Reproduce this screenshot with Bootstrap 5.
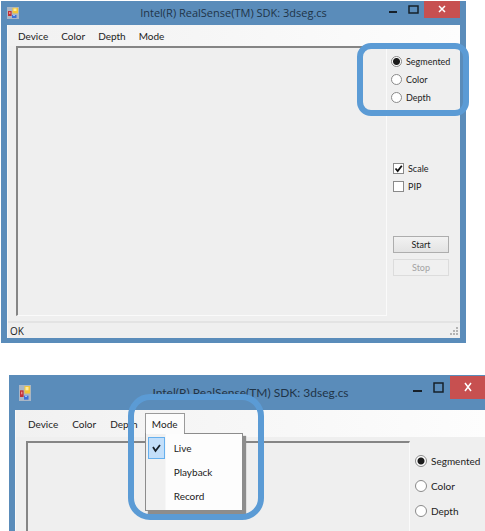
<!DOCTYPE html>
<html lang="en">
<head>
<meta charset="utf-8">
<meta name="viewport" content="width=device-width, initial-scale=1">
<title>Intel(R) RealSense(TM) SDK: 3dseg.cs</title>
<link href="https://cdn.jsdelivr.net/npm/bootstrap@5.3.0/dist/css/bootstrap.min.css" rel="stylesheet">
<style>
  body { background: #fff; padding-top: 1px; color: #222; }
  button, label { line-height: 1; }
  .win { background: #5a8cba; padding: 0 6px 5px; --ui: 10px; --face: Lato, "Open Sans", sans-serif; }
  .win-a { margin: 0 19px 32px 1px; --title-h: 24px; --menu-h: 21px; --label: 9px; --row: 18px; --side: 73px; --dot: 11px; }
  .win-b { margin: 0 -7px 0 9px; padding-bottom: 0; --title-h: 35px; --menu-h: 27px; --label: 10px; --row: 25px; --side: 76px; --dot: 12px; }
  .titlebar { height: var(--title-h); color: #1f3448; }
  .win-a .titlebar { font-family: "Open Sans", "Noto Sans", sans-serif; font-size: 11px; }
  .win-b .titlebar { font-family: var(--face); font-size: 12px; padding-top: 1px; }
  .titlebar h1 { font-size: inherit; line-height: 16px; font-weight: 400; }
  .side-slot { width: 80px; }
  .app-icon { width: 12px; height: 12px; }
  .win-b .app-icon { height: 16px; }
  .cap { border: 0; background: none; padding: 0; width: 21px; height: 17px; color: #16202a; }
  .cap-close { width: 36px; background: #c75050; color: #fff; }
  .win-b .cap { height: 23px; }
  .client { background: #efefef; border-left: 1px solid #f8f8f8; }
  .menus { height: var(--menu-h); padding-left: 4px; background: linear-gradient(90deg, #f1f1f1, #fdfdfd); }
  .menus button { font: var(--ui)/1 var(--face); color: #222; background: none; border: 1px solid transparent; padding: 0 6px; }
  .win-a .menus button { padding: 0 6px 0 5px; }
  .win-b .menus { padding: 3px 0 3px 5px; }
  .win-b .is-open { background: #fcfcfc; border-color: #9a9a9a #9a9a9a transparent; height: 21px; width: 40px; }
  .mode-list { top: 20px; left: 0; width: 98px; background: linear-gradient(90deg, #f1f1f1 19px, #fdfdfd 20px); border: 1px solid #8c8c8c; box-shadow: 3px 3px 1px #8d8d8d; padding: 2px 1px; z-index: 2; }
  .mode-list::before { content: ""; position: absolute; top: -1px; left: 0; width: 38px; height: 1px; background: #fcfcfc; }
  .mode-list button { height: 24px; width: 100%; padding: 0; gap: 9px; }
  .mode-list .tick { width: 17px; height: 22px; border: 1px solid transparent; }
  .mode-list .tick-on { background: #c3dffa; border-color: #66b0ee; }
  .view { border: solid; border-width: 2px 1px 1px 2px; border-color: #858585 #fafafa #fafafa #858585; margin-left: 8px; }
  .win-a .view { height: 270px; }
  .win-b .view { margin: 4px 0 0 10px; border-bottom: 0; min-height: 80px; }
  .side { width: var(--side); font-family: var(--face); font-size: var(--label); }
  .win-a .side { padding: 6px 11px 0 4px; }
  .win-b .side { padding: 11px 0 0 5px; }
  .opt { height: var(--row); gap: 4px; }
  .opt input { appearance: none; margin: 0; width: var(--dot); height: var(--dot); flex: none; background: #fff; border: 1px solid #8a8a8a; }
  .opt input[type=radio] { border-radius: 50%; }
  .opt input[type=radio]:checked { background: radial-gradient(circle, #1c1c1c 0 3px, #fff 4px); }
  .opt input[type=checkbox]:checked { background: #fff url("data:image/svg+xml,%3Csvg xmlns='http://www.w3.org/2000/svg' viewBox='0 0 9 9'%3E%3Cpath d='M1.5 4.5 3.7 7 7.8 1.8' fill='none' stroke='%23111' stroke-width='1.8'/%3E%3C/svg%3E"); }
  .radios { margin-bottom: 53px; }
  .checks { margin: 0 0 41px 2px; }
  .act { font-size: var(--label); height: 17px; margin: 0 0 6px 2px; padding: 0; border: 1px solid #adadad; color: #222; background: linear-gradient(#f2f2f2, #e3e3e3); }
  .act:disabled { border-color: #dcdcdc; color: #a3a3a3; background: #f0f0f0; }
  .status { margin-top: 5px; height: 17px; border-top: 2px solid #e3e3e3; font: 10px/14px "Open Sans", sans-serif; padding: 0 2px; }
  .callout { border: 6px solid #5b9bd5; pointer-events: none; z-index: 3; }
  .callout-side { top: 42px; right: -3px; width: 112px; height: 73px; border-radius: 14px; }
  .callout-mode { top: 19px; left: 119px; width: 136px; height: 126px; border-radius: 22px; }
</style>
<script src="https://cdn.jsdelivr.net/npm/bootstrap@5.3.0/dist/js/bootstrap.bundle.min.js"></script>
</head>
<body class="vh-100 overflow-hidden d-flex flex-column">
<svg class="d-none">
  <symbol id="app" viewBox="0 0 12 12" preserveAspectRatio="none">
    <rect width="12" height="12" fill="#a9b6c6"/>
    <rect x="5.5" y=".8" width="5.6" height="5.6" fill="#f3c537"/><rect x="6.5" y="1.5" width="3" height="2.5" fill="#ffeb9c"/>
    <rect x="1" y="4" width="3.6" height="5" fill="#c22f36"/><rect x="2" y="5" width="1.4" height="2" fill="#ee8b86"/>
    <rect x="5" y="8" width="4.5" height="3" fill="#3d71d8"/><rect x="6" y="8" width="2" height="1" fill="#9dc0f7"/>
  </symbol>
</svg>

<section class="win win-a position-relative">
  <header class="titlebar d-flex align-items-center">
    <div class="side-slot d-flex"><svg class="app-icon" aria-hidden="true"><use href="#app"/></svg></div>
    <h1 class="flex-grow-1 text-center text-nowrap mb-0">Intel(R) RealSense(TM) SDK: 3dseg.cs</h1>
    <div class="side-slot d-flex justify-content-end align-self-start">
      <button class="cap d-flex" aria-label="Minimize"><svg width="21" height="17"><path d="M7 11h8" stroke="currentColor" stroke-width="2"/></svg></button>
      <button class="cap d-flex" aria-label="Maximize"><svg width="21" height="17"><path d="M6 5h9v7H6z" fill="none" stroke="currentColor" stroke-width="1.5"/></svg></button>
      <button class="cap cap-close d-flex" aria-label="Close"><svg width="36" height="17"><path d="m15 5 6 6m0-6-6 6" stroke="currentColor" stroke-width="1.5"/></svg></button>
    </div>
  </header>
  <div class="client">
    <nav class="menus d-flex align-items-center">
      <button>Device</button><button>Color</button><button>Depth</button><button>Mode</button>
    </nav>
    <div class="d-flex">
      <div class="view flex-grow-1"></div>
      <div class="side">
        <div class="radios">
          <label class="opt d-flex align-items-center"><input type="radio" name="a" checked>Segmented</label>
          <label class="opt d-flex align-items-center"><input type="radio" name="a">Color</label>
          <label class="opt d-flex align-items-center"><input type="radio" name="a">Depth</label>
        </div>
        <div class="checks">
          <label class="opt d-flex align-items-center"><input type="checkbox" checked>Scale</label>
          <label class="opt d-flex align-items-center"><input type="checkbox">PIP</label>
        </div>
        <div class="d-grid">
          <button class="act">Start</button>
          <button class="act" disabled>Stop</button>
        </div>
      </div>
    </div>
    <footer class="status d-flex justify-content-between align-items-end">
      <span>OK</span>
      <svg width="8" height="11" fill="#b3b3b3" aria-hidden="true"><path d="M6 0h2v2H6zM3 3h2v2H3zM6 3h2v2H6zM0 6h2v2H0zM3 6h2v2H3zM6 6h2v2H6z"/></svg>
    </footer>
  </div>
  <div class="callout callout-side position-absolute"></div>
</section>

<section class="win win-b position-relative flex-grow-1 d-flex flex-column">
  <header class="titlebar d-flex align-items-center flex-shrink-0">
    <div class="side-slot d-flex ps-1"><svg class="app-icon" aria-hidden="true"><use href="#app"/></svg></div>
    <h1 class="flex-grow-1 text-center text-nowrap mb-0">Intel(R) RealSense(TM) SDK: 3dseg.cs</h1>
    <div class="side-slot d-flex justify-content-end align-self-start">
      <button class="cap d-flex" aria-label="Minimize"><svg width="21" height="23"><path d="M5 15h9" stroke="currentColor" stroke-width="2"/></svg></button>
      <button class="cap d-flex" aria-label="Maximize"><svg width="21" height="23"><path d="M5 7h9v9H5z" fill="none" stroke="currentColor" stroke-width="1.5"/></svg></button>
      <button class="cap cap-close d-flex" aria-label="Close"><svg width="36" height="23"><path d="m15 7 6 8m0-8-6 8" stroke="currentColor" stroke-width="1.5"/></svg></button>
    </div>
  </header>
  <div class="client flex-grow-1 d-flex flex-column">
    <nav class="menus d-flex flex-shrink-0">
      <button>Device</button><button>Color</button><button>Depth</button>
      <div class="position-relative d-flex">
        <button class="is-open" aria-expanded="true">Mode</button>
        <div class="mode-list position-absolute">
          <button class="d-flex align-items-center"><span class="tick tick-on d-flex"><svg width="15" height="20"><path d="m4 9 2.5 4L11 7" fill="none" stroke="#16202a" stroke-width="1.8"/></svg></span>Live</button>
          <button class="d-flex align-items-center"><span class="tick"></span>Playback</button>
          <button class="d-flex align-items-center"><span class="tick"></span>Record</button>
        </div>
      </div>
    </nav>
    <div class="d-flex flex-grow-1">
      <div class="view flex-grow-1"></div>
      <div class="side">
        <label class="opt d-flex align-items-center"><input type="radio" name="b" checked>Segmented</label>
        <label class="opt d-flex align-items-center"><input type="radio" name="b">Color</label>
        <label class="opt d-flex align-items-center"><input type="radio" name="b">Depth</label>
      </div>
    </div>
  </div>
  <div class="callout callout-mode position-absolute"></div>
</section>
</body>
</html>
